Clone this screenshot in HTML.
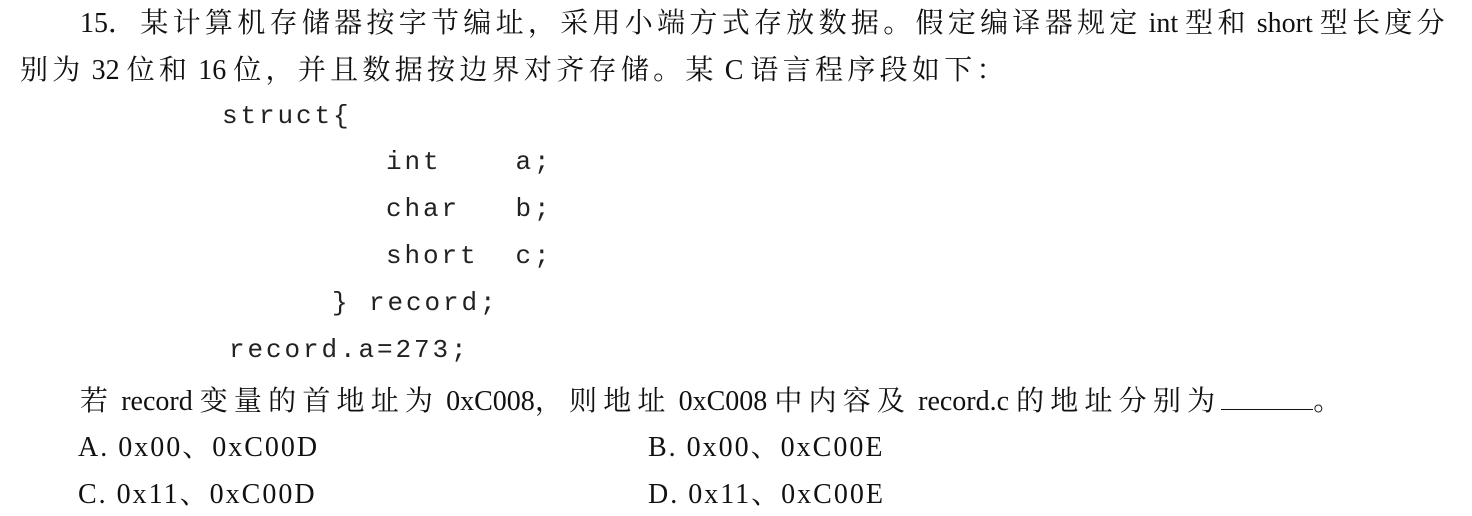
<!DOCTYPE html>
<html><head><meta charset="utf-8"><style>
html,body{margin:0;padding:0;background:#fff;}
body{width:1472px;height:516px;position:relative;overflow:hidden;color:#111;}
.l{position:absolute;white-space:pre;font-family:"Liberation Serif","Noto Serif CJK SC",serif;font-size:28px;line-height:30px;letter-spacing:4.3px;}
.e{letter-spacing:0;}
.c{position:absolute;white-space:pre;font-family:"Liberation Mono",monospace;font-size:26px;line-height:30px;letter-spacing:2.9px;color:#222;}
.u{display:inline-block;width:92px;border-bottom:1.5px solid #111;height:24px;vertical-align:baseline;}
</style></head><body>
<div class="l" style="left:80px;top:9px;"><span class="e">15</span>．某计算机存储器按字节编址，采用小端方式存放数据。假定编译器规定<span class="e"> int </span>型和<span class="e"> short </span>型长度分</div>
<div class="l" style="left:20px;top:56px;">别为<span class="e"> 32 </span>位和<span class="e"> 16 </span>位，并且数据按边界对齐存储。某<span class="e"> C </span>语言程序段如下：</div>
<div class="c" style="left:222px;top:101px;">struct{</div>
<div class="c" style="left:386px;top:147px;">int    a;</div>
<div class="c" style="left:386px;top:194px;">char   b;</div>
<div class="c" style="left:386px;top:241px;">short  c;</div>
<div class="c" style="left:332px;top:288px;">} record;</div>
<div class="c" style="left:229px;top:335px;">record.a=273;</div>
<div class="l" style="left:80px;top:385px;letter-spacing:6.2px;">若<span class="e"> record </span>变量的首地址为<span class="e"> 0xC008</span>，则地址<span class="e"> 0xC008 </span>中内容及<span class="e"> record.c </span>的地址分别为<span class="u"></span>。</div>
<div class="l" style="left:78px;top:433px;letter-spacing:2px;">A. 0x00、0xC00D</div>
<div class="l" style="left:648px;top:433px;letter-spacing:2px;">B. 0x00、0xC00E</div>
<div class="l" style="left:78px;top:480px;letter-spacing:2px;">C. 0x11、0xC00D</div>
<div class="l" style="left:648px;top:480px;letter-spacing:2px;">D. 0x11、0xC00E</div>
</body></html>
